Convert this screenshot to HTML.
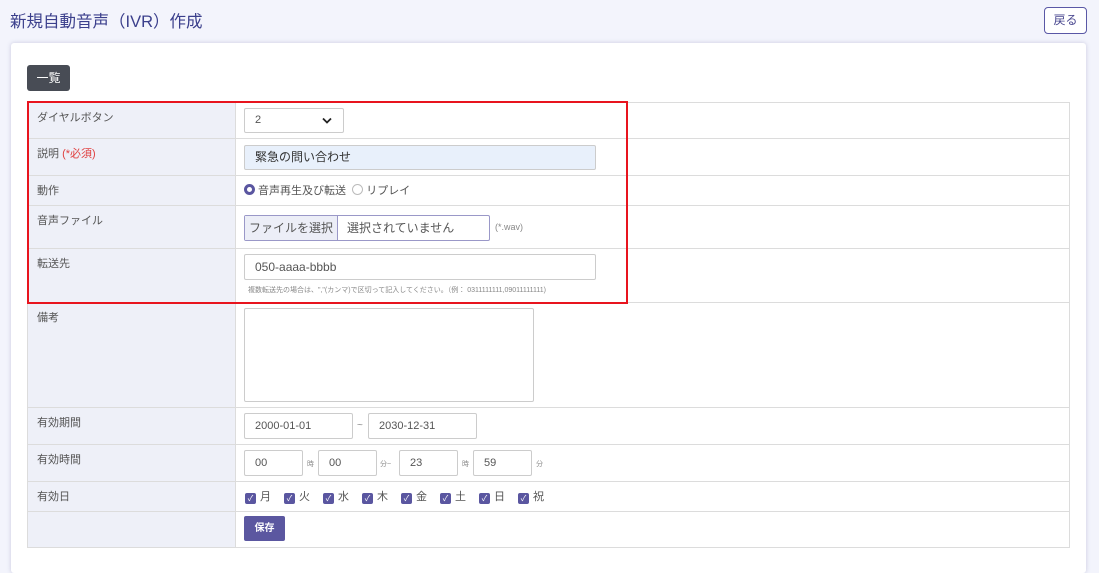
<!DOCTYPE html>
<html><head><meta charset="utf-8"><style>
*{box-sizing:border-box;margin:0;padding:0}
body{width:1099px;height:564px;background:#f3f4fc;font-family:"Liberation Sans","Noto Sans CJK JP",sans-serif;position:relative;overflow:hidden;color:#555}
.abs{position:absolute}
.title{left:10px;top:8px;font-size:16.5px;color:#3b3f8c}
.back{left:1044px;top:7px;width:43px;height:27px;border:1px solid #5a58a6;border-radius:4px;background:#fff;color:#4a4890;font-size:12px;text-align:center;line-height:25px}
.panel{left:11px;top:43px;width:1075px;height:530px;background:#fff;border-radius:3px;box-shadow:0 0 4px rgba(120,120,170,.35)}
.list{left:27px;top:65px;width:43px;height:26px;background:#484c55;color:#fff;border-radius:3px;font-size:12px;text-align:center;line-height:26px}
.row{position:absolute;left:27px;width:1043px;border:1px solid #dcdcdc;border-top:none}
.lab{position:absolute;left:0;top:0;bottom:0;width:208px;background:#eef0f8;border-right:1px solid #dcdcdc;font-size:11px;padding:6px 9px;color:#555}
.in{position:absolute;border:1px solid #ccc;border-radius:2px;background:#fff;font-size:11px;color:#555;padding-left:10px}
.small{font-size:7px;color:#888}
.d{display:inline-block;width:39px}
.cb{display:inline-block;width:11px;height:11px;background:#5a56a0;border-radius:2px;color:#fff;font-size:8px;line-height:11px;text-align:center;vertical-align:-1px;margin-right:4px}
</style></head><body>
<div class="abs title">新規自動音声（IVR）作成</div>
<div class="abs back">戻る</div>
<div class="abs panel"></div>
<div class="abs list">一覧</div>

<div class="row" style="top:102px;height:37px;border-top:1px solid #dcdcdc"><div class="lab">ダイヤルボタン</div>
<div class="in" style="left:216px;top:5px;width:100px;height:25px;line-height:23px">2<svg style="position:absolute;right:11px;top:8px" width="10" height="7" viewBox="0 0 10 7"><path d="M1 1.5L5 5.5L9 1.5" fill="none" stroke="#222" stroke-width="1.8"/></svg></div></div>
<div class="row" style="top:139px;height:37px"><div class="lab">説明 <span style="color:#e04040">(*必須)</span></div>
<div class="in" style="left:216px;top:6px;width:352px;height:25px;line-height:23px;background:#e8f0fb;color:#333;font-size:12px">緊急の問い合わせ</div></div>
<div class="row" style="top:176px;height:30px"><div class="lab">動作</div>
<div class="abs" style="left:216px;top:6px;font-size:11px"><span style="display:inline-block;width:11px;height:11px;border:3px solid #5a56a0;border-radius:50%;vertical-align:-1px"></span> 音声再生及び転送 &nbsp;<span style="display:inline-block;width:11px;height:11px;border:1px solid #bbb;border-radius:50%;vertical-align:-1px"></span> リプレイ</div></div>
<div class="row" style="top:206px;height:43px"><div class="lab">音声ファイル</div>
<div class="abs" style="left:216px;top:9px;width:246px;height:26px;border:1px solid #9a98c8;border-radius:2px;font-size:12px;line-height:24px;background:#fff"><span style="display:inline-block;width:93px;height:24px;background:#eceef7;border-right:1px solid #9a98c8;text-align:center">ファイルを選択</span><span style="padding-left:9px">選択されていません</span></div>
<div class="abs small" style="left:467px;top:16px;font-size:9px">(*.wav)</div></div>
<div class="row" style="top:249px;height:54px"><div class="lab">転送先</div>
<div class="in" style="left:216px;top:5px;width:352px;height:26px;line-height:24px;font-size:12px">050-aaaa-bbbb</div>
<div class="abs small" style="left:220px;top:36px">複数転送先の場合は、","(カンマ)で区切って記入してください。（例： 0311111111,09011111111)</div></div>
<div class="row" style="top:303px;height:105px"><div class="lab">備考</div>
<div class="in" style="left:216px;top:5px;width:290px;height:94px"></div></div>
<div class="row" style="top:408px;height:37px"><div class="lab">有効期間</div>
<div class="in" style="left:216px;top:5px;width:109px;height:26px;line-height:24px">2000-01-01</div>
<div class="abs small" style="left:329px;top:12px;font-size:10px">~</div>
<div class="in" style="left:340px;top:5px;width:109px;height:26px;line-height:24px">2030-12-31</div></div>
<div class="row" style="top:445px;height:37px"><div class="lab">有効時間</div>
<div class="in" style="left:216px;top:5px;width:59px;height:26px;line-height:24px">00</div><div class="abs small" style="left:279px;top:14px">時</div>
<div class="in" style="left:290px;top:5px;width:59px;height:26px;line-height:24px">00</div><div class="abs small" style="left:352px;top:14px">分~</div>
<div class="in" style="left:371px;top:5px;width:59px;height:26px;line-height:24px">23</div><div class="abs small" style="left:434px;top:14px">時</div>
<div class="in" style="left:445px;top:5px;width:59px;height:26px;line-height:24px">59</div><div class="abs small" style="left:508px;top:14px">分</div></div>
<div class="row" style="top:482px;height:30px"><div class="lab">有効日</div>
<div class="abs" style="left:217px;top:6px;font-size:11px;white-space:nowrap"><span class="d"><span class="cb">✓</span>月</span><span class="d"><span class="cb">✓</span>火</span><span class="d"><span class="cb">✓</span>水</span><span class="d"><span class="cb">✓</span>木</span><span class="d"><span class="cb">✓</span>金</span><span class="d"><span class="cb">✓</span>土</span><span class="d"><span class="cb">✓</span>日</span><span class="d"><span class="cb">✓</span>祝</span></div></div>
<div class="row" style="top:512px;height:36px"><div class="lab"></div>
<div class="abs" style="left:216px;top:4px;width:41px;height:25px;background:#5b57a0;border-radius:2px;color:#fff;font-size:10px;font-weight:bold;text-align:center;line-height:25px">保存</div></div>

<div class="abs" style="left:27px;top:101px;width:601px;height:203px;border:2px solid #e8141e"></div>
</body></html>
